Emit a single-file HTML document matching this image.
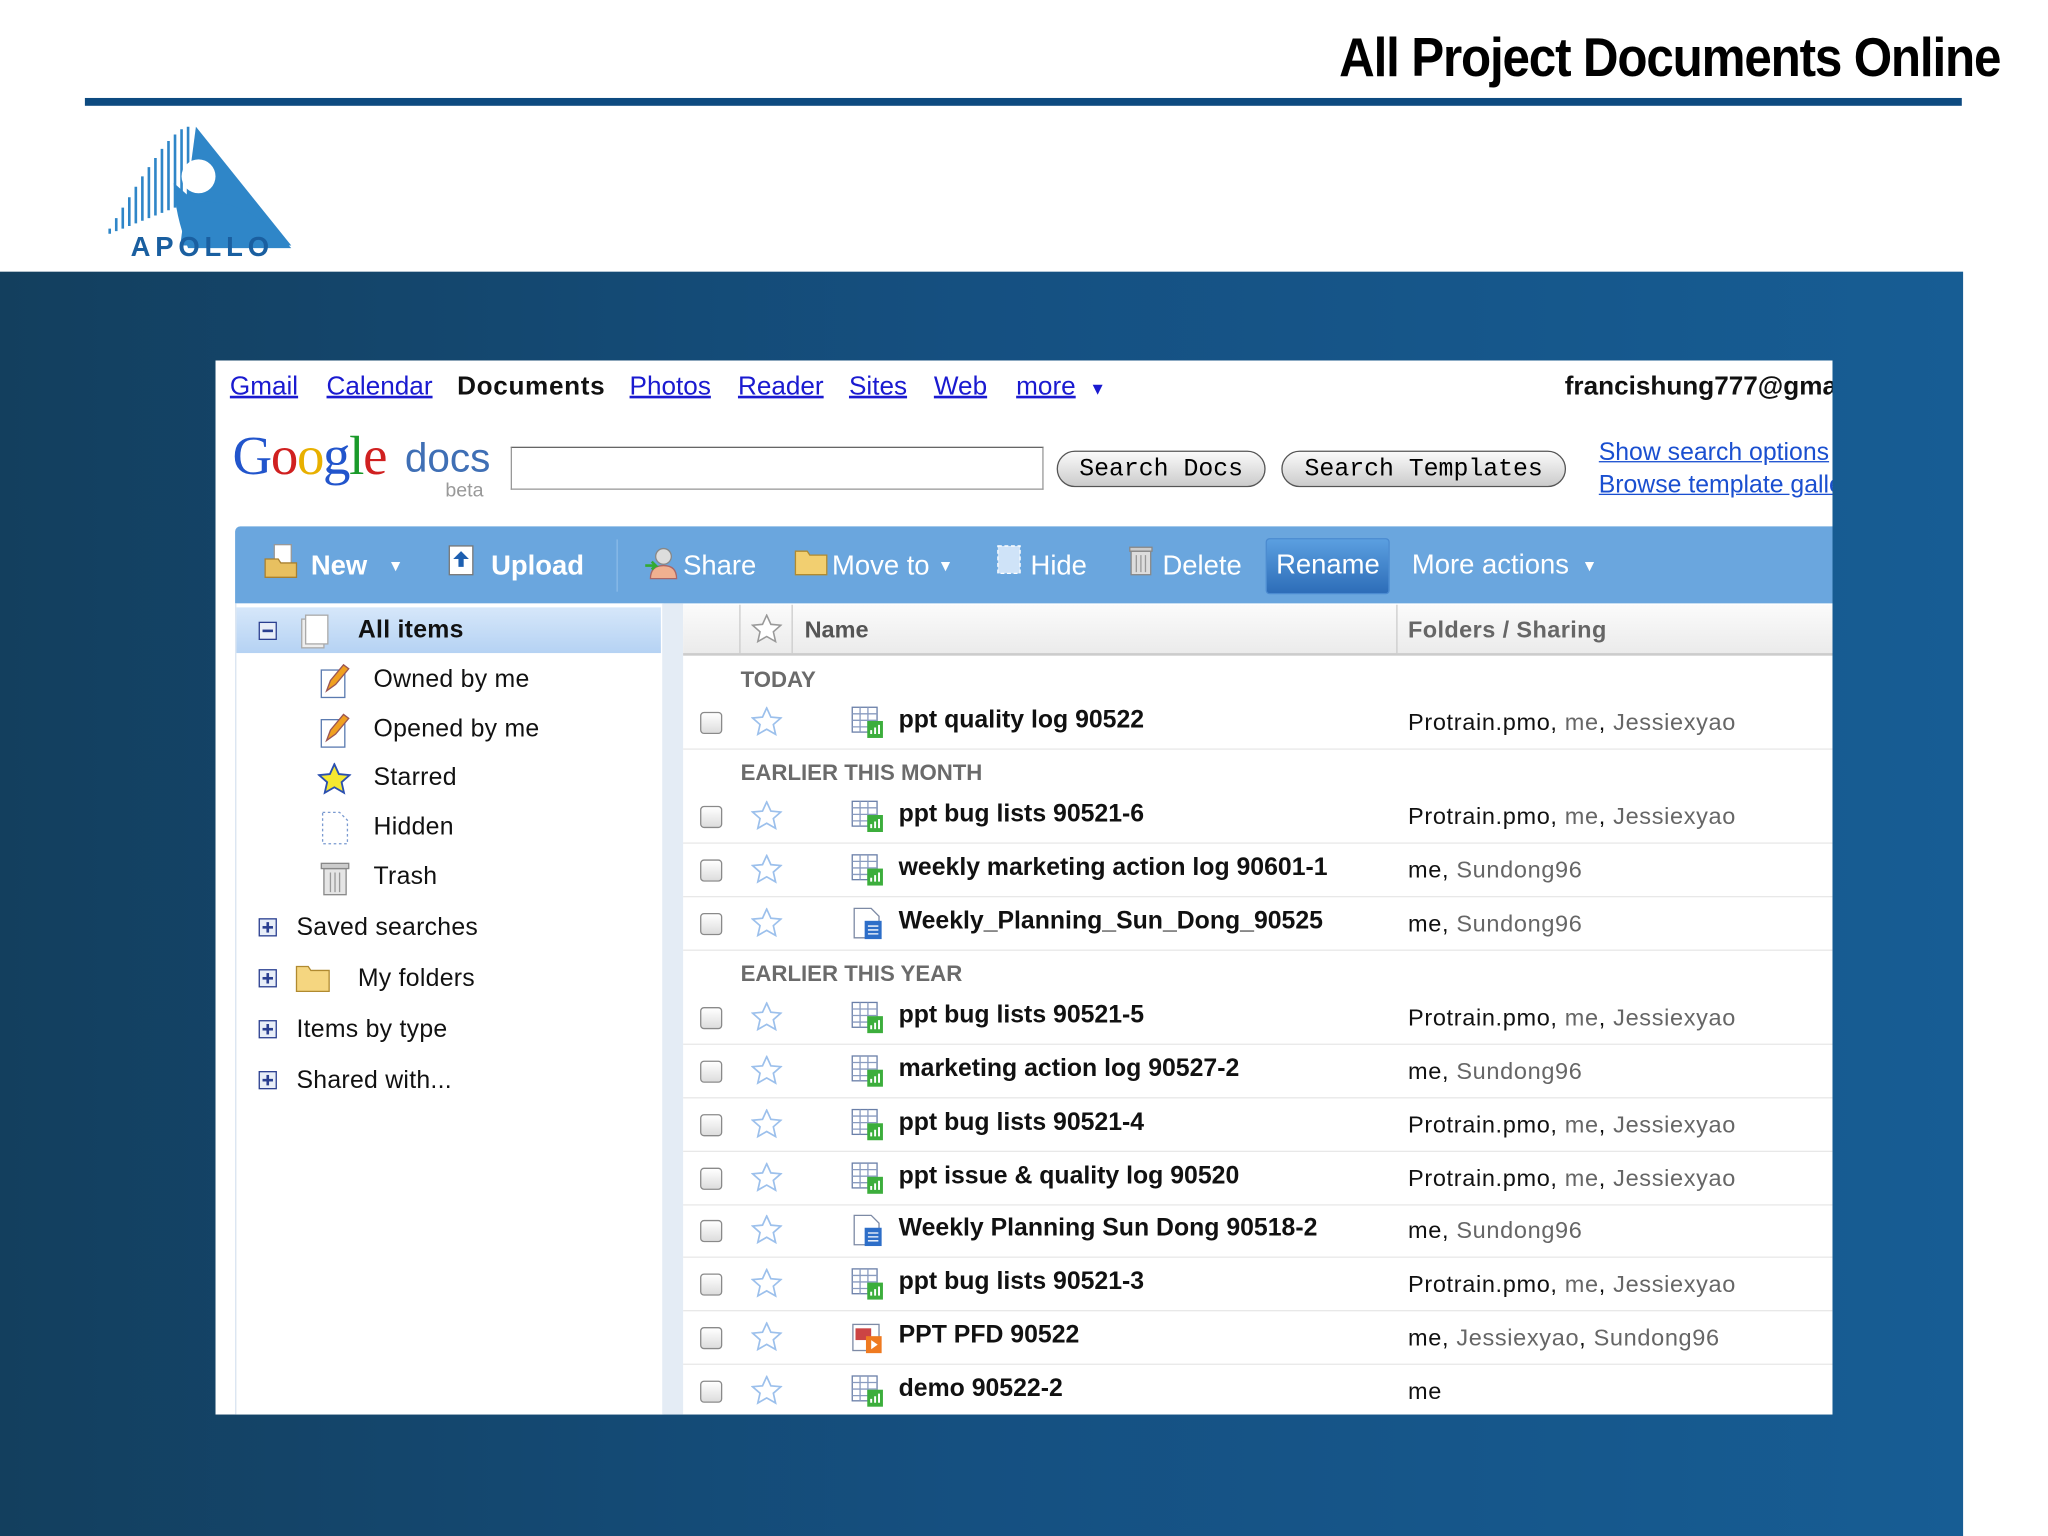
<!DOCTYPE html>
<html><head><meta charset="utf-8"><style>
html,body{margin:0;padding:0;width:2048px;height:1536px;overflow:hidden;background:#fff}
#w{position:absolute;left:0;top:0;width:1568px;height:1176px;transform:scale(1.306122);transform-origin:0 0;font-family:"Liberation Sans",sans-serif}
.a{position:absolute}
.t{position:absolute;white-space:nowrap}
.nav{position:absolute;top:285px;font-size:20px;color:#1a1ad0;text-decoration:underline;white-space:nowrap}
.tb{color:#fff;font-size:21px}
.sec{position:absolute;left:567px;font-size:17px;font-weight:bold;color:#6b6b6b}
.r{position:absolute;left:523px;width:880px;height:40px;border-bottom:1px solid #e8e8e8}
.r .cb{position:absolute;left:13px;top:12px;width:15px;height:15px;border:1px solid #8a8a8a;border-radius:3px;background:linear-gradient(#fff,#ddd)}
.r svg{position:absolute}
.r .n{position:absolute;left:165px;top:8px;font-size:19px;font-weight:bold;color:#111;white-space:nowrap}
.r .s{position:absolute;left:555px;top:10px;font-size:18px;color:#111;white-space:nowrap;letter-spacing:.5px}
.r .s i{font-style:normal;color:#666}
.lp{position:absolute;font-size:19px;color:#111;white-space:nowrap;letter-spacing:.2px}
</style></head><body><div id="w">
<div class="t" style="right:37px;top:20px;font-size:42px;font-weight:bold;letter-spacing:-1px;transform:scaleX(.9);transform-origin:right;font-family:'Liberation Sans Narrow','Liberation Sans',sans-serif">All Project Documents Online</div>
<div class="a" style="left:65px;top:75px;width:1437px;height:6px;background:#0d4a80"></div>
<svg class="a" style="left:78px;top:95px" width="150" height="105" viewBox="0 0 150 105">
<path d="M72 2 L145 93 L60 93 Z" fill="#2f86c8"/>
<g stroke="#2f86c8" stroke-width="2">
<path d="M6 84V80M11 82V72M16 80V64M21 78V56M26 76V48M31 74V40M36 72V33M41 70V26M46 68V19M51 66V13M56 64V8M61 62V4M66 62V2"/></g>
<path d="M55 45 Q56 70 66 95 L145 95 Q110 55 72 60Z" fill="#2f86c8"/>
<circle cx="74" cy="40" r="13" fill="#fff"/>
<text x="22" y="101" font-family="Liberation Sans" font-weight="bold" font-size="21" fill="#1a5fa0" textLength="106">APOLLO</text>
</svg>
<div class="a" style="left:0;top:208px;width:1503px;height:968px;background:linear-gradient(90deg,#133f5e,#155081 50%,#175d94)"></div>
<div class="a" style="left:165px;top:276px;width:1238px;height:807px;background:#fff;overflow:hidden"></div>
<div class="nav" style="left:176px">Gmail</div>
<div class="nav" style="left:250px">Calendar</div>
<div class="nav" style="left:350px;color:#111;text-decoration:none;font-weight:bold;letter-spacing:.5px">Documents</div>
<div class="nav" style="left:482px">Photos</div>
<div class="nav" style="left:565px">Reader</div>
<div class="nav" style="left:650px">Sites</div>
<div class="nav" style="left:715px">Web</div>
<div class="nav" style="left:778px">more</div>
<div class="t" style="left:834px;top:290px;color:#1a1ad0;font-size:13px">▼</div>
<div class="a" style="left:1198px;top:285px;width:205px;overflow:hidden;font-size:20px;font-weight:bold;color:#111;white-space:nowrap">francishung777@gmail.com</div>
<div class="t" style="left:178px;top:326px;font-size:42px;font-family:'Liberation Serif',serif;letter-spacing:-1px"><span style="color:#2255cc">G</span><span style="color:#d02020">o</span><span style="color:#e8b000">o</span><span style="color:#2255cc">g</span><span style="color:#1a9a2a">l</span><span style="color:#d02020">e</span></div>
<div class="t" style="left:310px;top:333px;font-size:31px;color:#3f6fb5">docs</div>
<div class="t" style="left:341px;top:367px;font-size:15px;color:#999">beta</div>
<div class="a" style="left:391px;top:342px;width:406px;height:31px;border:1px solid #999;border-top-color:#666"></div>
<div class="t" style="left:809px;top:345px;width:158px;height:26px;border:1px solid #555;border-radius:14px;background:linear-gradient(#fafafa,#ccc);font-family:'Liberation Mono',monospace;font-size:19px;text-align:center;line-height:26px">Search Docs</div>
<div class="t" style="left:981px;top:345px;width:216px;height:26px;border:1px solid #555;border-radius:14px;background:linear-gradient(#fafafa,#ccc);font-family:'Liberation Mono',monospace;font-size:19px;text-align:center;line-height:26px">Search Templates</div>
<div class="a" style="left:1224px;top:334px;width:179px;overflow:hidden;font-size:19px;line-height:25px;color:#1a4fd0;white-space:nowrap;text-decoration:underline">Show search options<br>Browse template gallery</div>
<div class="a" style="left:180px;top:403px;width:1223px;height:59px;background:#6aa6de;border-radius:4px 0 0 0"></div>
<div class="a" style="left:472px;top:413px;width:1px;height:40px;background:#8bbbe8"></div>
<svg class="a" style="left:201px;top:416px" width="30" height="28"><rect x="9" y="1" width="13" height="17" fill="#fff" stroke="#999"/><path d="M2 12h10l2 3h12v11H2z" fill="#e8c060" stroke="#a88030"/></svg>
<div class="t tb" style="left:238px;top:422px;font-weight:bold">New</div>
<div class="t" style="left:297px;top:426px;color:#fff;font-size:12px">▼</div>
<svg class="a" style="left:342px;top:416px" width="24" height="28"><rect x="2" y="2" width="18" height="22" fill="#fff" stroke="#777"/><path d="M11 6l-6 6h4v6h4v-6h4z" fill="#1d5fb0"/></svg>
<div class="t tb" style="left:376px;top:422px;font-weight:bold">Upload</div>
<svg class="a" style="left:493px;top:418px" width="26" height="26"><circle cx="15" cy="8" r="6" fill="#ddd" stroke="#888"/><path d="M5 25c0-8 5-10 10-10s10 2 10 10z" fill="#f0b090" stroke="#a66"/><path d="M1 15h8l-3 -3M9 15l-3 3" stroke="#3a3" stroke-width="2" fill="none"/></svg>
<div class="t tb" style="left:523px;top:422px">Share</div>
<svg class="a" style="left:608px;top:418px" width="26" height="24"><path d="M1 4h9l2 3h13v15H1z" fill="#f2cf70" stroke="#b08a30"/></svg>
<div class="t tb" style="left:637px;top:422px">Move to</div>
<div class="t" style="left:718px;top:426px;color:#fff;font-size:12px">▼</div>
<svg class="a" style="left:762px;top:416px" width="22" height="26"><rect x="2" y="2" width="17" height="21" fill="#cfe3f8" stroke="#fff" stroke-dasharray="3 2"/></svg>
<div class="t tb" style="left:789px;top:422px">Hide</div>
<svg class="a" style="left:863px;top:416px" width="22" height="26"><rect x="3" y="6" width="15" height="18" fill="#ddd" stroke="#888"/><rect x="2" y="3" width="17" height="3" fill="#ccc" stroke="#888"/><path d="M7 9v13M10.5 9v13M14 9v13" stroke="#999"/></svg>
<div class="t tb" style="left:890px;top:422px">Delete</div>
<div class="a" style="left:969px;top:412px;width:93px;height:41px;border-radius:3px;background:linear-gradient(#5b9fe0,#2d6db8);border:1px solid #4a8ad0"></div>
<div class="t tb" style="left:977px;top:421px">Rename</div>
<div class="t tb" style="left:1081px;top:421px">More actions</div>
<div class="t" style="left:1211px;top:426px;color:#fff;font-size:12px">▼</div>
<div class="a" style="left:180px;top:462px;width:327px;height:621px;background:#fff;border-left:1px solid #d9e4f0"></div>
<div class="a" style="left:181px;top:465px;width:325px;height:35px;background:linear-gradient(#d6e7fa,#b5d2f3)"></div>
<div class="a" style="left:198px;top:476px;width:12px;height:12px;border:1px solid #2a3f90;background:#e8eef8"><div class="a" style="left:2px;top:5px;width:8px;height:2px;background:#2a3f90"></div></div>
<svg class="a" style="left:227px;top:470px" width="26" height="28"><rect x="4" y="4" width="17" height="22" fill="#eee" stroke="#aaa"/><rect x="7" y="1" width="17" height="22" fill="#fff" stroke="#aaa"/></svg>
<div class="lp" style="left:274px;top:472px;font-weight:bold">All items</div>
<svg class="a" style="left:244px;top:507px" width="26" height="28"><rect x="2" y="6" width="18" height="21" fill="#fff" stroke="#5a7ab0"/><path d="M6 22l3-8 10-12 4 3-10 12z" fill="#f0a020" stroke="#955"/></svg>
<div class="lp" style="left:286px;top:510px">Owned by me</div>
<svg class="a" style="left:244px;top:545px" width="26" height="28"><rect x="2" y="6" width="18" height="21" fill="#fff" stroke="#5a7ab0"/><path d="M6 22l3-8 10-12 4 3-10 12z" fill="#f0a020" stroke="#955"/></svg>
<div class="lp" style="left:286px;top:548px">Opened by me</div>
<svg class="a" style="left:243px;top:584px" width="26" height="26" viewBox="0 0 24 24"><path d="M12 1l3.2 7 7.6.7-5.7 5 1.7 7.5L12 17.3 5.2 21.2l1.7-7.5-5.7-5 7.6-.7z" fill="#f5e830" stroke="#2a4fb0" stroke-width="1.3"/></svg>
<div class="lp" style="left:286px;top:585px">Starred</div>
<svg class="a" style="left:245px;top:620px" width="24" height="28"><path d="M2 2h13l6 6v18H2z" fill="#fff" stroke="#7a9ad0" stroke-dasharray="2 2"/></svg>
<div class="lp" style="left:286px;top:623px">Hidden</div>
<svg class="a" style="left:245px;top:658px" width="24" height="28"><rect x="3" y="7" width="17" height="20" fill="#e5e5e5" stroke="#888"/><rect x="1" y="3" width="21" height="4" fill="#ccc" stroke="#888"/><path d="M8 10v15M11.5 10v15M15 10v15" stroke="#999"/></svg>
<div class="lp" style="left:286px;top:661px">Trash</div>
<div class="a" style="left:198px;top:703px;width:12px;height:12px;border:1px solid #2a3f90;background:#e8eef8"><div class="a" style="left:2px;top:5px;width:8px;height:2px;background:#2a3f90"></div><div class="a" style="left:5px;top:2px;width:2px;height:8px;background:#2a3f90"></div></div>
<div class="lp" style="left:227px;top:700px">Saved searches</div>
<div class="a" style="left:198px;top:742px;width:12px;height:12px;border:1px solid #2a3f90;background:#e8eef8"><div class="a" style="left:2px;top:5px;width:8px;height:2px;background:#2a3f90"></div><div class="a" style="left:5px;top:2px;width:2px;height:8px;background:#2a3f90"></div></div>
<svg class="a" style="left:226px;top:737px" width="28" height="24"><path d="M1 3h9l2 3h14v16H1z" fill="#f5d680" stroke="#b08a30"/></svg>
<div class="lp" style="left:274px;top:739px">My folders</div>
<div class="a" style="left:198px;top:781px;width:12px;height:12px;border:1px solid #2a3f90;background:#e8eef8"><div class="a" style="left:2px;top:5px;width:8px;height:2px;background:#2a3f90"></div><div class="a" style="left:5px;top:2px;width:2px;height:8px;background:#2a3f90"></div></div>
<div class="lp" style="left:227px;top:778px">Items by type</div>
<div class="a" style="left:198px;top:820px;width:12px;height:12px;border:1px solid #2a3f90;background:#e8eef8"><div class="a" style="left:2px;top:5px;width:8px;height:2px;background:#2a3f90"></div><div class="a" style="left:5px;top:2px;width:2px;height:8px;background:#2a3f90"></div></div>
<div class="lp" style="left:227px;top:817px">Shared with...</div>
<div class="a" style="left:507px;top:462px;width:16px;height:621px;background:#e4ecf5"></div>
<div class="a" style="left:523px;top:463px;width:880px;height:37px;background:linear-gradient(#fbfbfb,#ebebeb);border-bottom:2px solid #ccc"></div>
<div class="a" style="left:566px;top:463px;width:1px;height:37px;background:#ccc"></div>
<div class="a" style="left:606px;top:463px;width:1px;height:37px;background:#ccc"></div>
<div class="a" style="left:1069px;top:463px;width:1px;height:37px;background:#ccc"></div>
<svg class="a" style="left:575px;top:470px" width="24" height="24" viewBox="0 0 24 24"><path d="M12 1l3.2 7 7.6.7-5.7 5 1.7 7.5L12 17.3 5.2 21.2l1.7-7.5-5.7-5 7.6-.7z" fill="#fff" stroke="#999" stroke-width="1.2"/></svg>
<div class="t" style="left:616px;top:472px;font-size:18px;font-weight:bold;color:#555">Name</div>
<div class="t" style="left:1078px;top:472px;font-size:18px;font-weight:bold;color:#666;letter-spacing:.3px">Folders / Sharing</div>
<svg width="0" height="0" style="position:absolute"><defs>
<g id="st"><path d="M12 1l3.2 7 7.6.7-5.7 5 1.7 7.5L12 17.3 5.2 21.2l1.7-7.5-5.7-5 7.6-.7z" fill="#fff" stroke="#9cc0ec" stroke-width="1.3"/></g>
<g id="sh"><rect x="1.5" y="1.5" width="19" height="19" fill="#fff" stroke="#6a7fa8"/><path d="M1.5 6.5h19M1.5 11.5h19M1.5 16.5h19M7.5 1.5v19M13.5 1.5v19" stroke="#8a9cc0"/><rect x="13" y="12" width="12" height="13" fill="#3cae3c"/><path d="M16 22v-3M19 22v-5M22 22v-7" stroke="#fff" stroke-width="1.5"/></g>
<g id="dc"><path d="M3 1.5h13l6 6V24H3z" fill="#fff" stroke="#7d8aa5"/><rect x="11" y="11" width="13" height="14" fill="#2d6ec8"/><path d="M13.5 15h8M13.5 18h8M13.5 21h8" stroke="#fff"/></g>
<g id="pp"><rect x="2" y="3" width="20" height="20" fill="#fff" stroke="#7d8aa5"/><rect x="4" y="6" width="12" height="9" fill="#c44"/><rect x="12" y="12" width="12" height="13" fill="#ef7a20"/><path d="M16 15v7l5-3.5z" fill="#fff"/></g>
</defs></svg>
<div class="sec" style="top:511px">TODAY</div>
<div class="sec" style="top:582px">EARLIER THIS MONTH</div>
<div class="sec" style="top:736px">EARLIER THIS YEAR</div>

<div class="r" style="top:533px"><div class="cb"></div><svg style="left:52px;top:8px" width="24" height="24" viewBox="0 0 24 24"><use href="#st"/></svg><svg style="left:128px;top:7px" width="26" height="26"><use href="#sh"/></svg><div class="n">ppt quality log 90522</div><div class="s">Protrain.pmo, <i>me</i>, <i>Jessiexyao</i></div></div>
<div class="r" style="top:605px"><div class="cb"></div><svg style="left:52px;top:8px" width="24" height="24" viewBox="0 0 24 24"><use href="#st"/></svg><svg style="left:128px;top:7px" width="26" height="26"><use href="#sh"/></svg><div class="n">ppt bug lists 90521-6</div><div class="s">Protrain.pmo, <i>me</i>, <i>Jessiexyao</i></div></div>
<div class="r" style="top:646px"><div class="cb"></div><svg style="left:52px;top:8px" width="24" height="24" viewBox="0 0 24 24"><use href="#st"/></svg><svg style="left:128px;top:7px" width="26" height="26"><use href="#sh"/></svg><div class="n">weekly marketing action log 90601-1</div><div class="s">me, <i>Sundong96</i></div></div>
<div class="r" style="top:687px"><div class="cb"></div><svg style="left:52px;top:8px" width="24" height="24" viewBox="0 0 24 24"><use href="#st"/></svg><svg style="left:128px;top:7px" width="26" height="26"><use href="#dc"/></svg><div class="n">Weekly_Planning_Sun_Dong_90525</div><div class="s">me, <i>Sundong96</i></div></div>
<div class="r" style="top:759px"><div class="cb"></div><svg style="left:52px;top:8px" width="24" height="24" viewBox="0 0 24 24"><use href="#st"/></svg><svg style="left:128px;top:7px" width="26" height="26"><use href="#sh"/></svg><div class="n">ppt bug lists 90521-5</div><div class="s">Protrain.pmo, <i>me</i>, <i>Jessiexyao</i></div></div>
<div class="r" style="top:800px"><div class="cb"></div><svg style="left:52px;top:8px" width="24" height="24" viewBox="0 0 24 24"><use href="#st"/></svg><svg style="left:128px;top:7px" width="26" height="26"><use href="#sh"/></svg><div class="n">marketing action log 90527-2</div><div class="s">me, <i>Sundong96</i></div></div>
<div class="r" style="top:841px"><div class="cb"></div><svg style="left:52px;top:8px" width="24" height="24" viewBox="0 0 24 24"><use href="#st"/></svg><svg style="left:128px;top:7px" width="26" height="26"><use href="#sh"/></svg><div class="n">ppt bug lists 90521-4</div><div class="s">Protrain.pmo, <i>me</i>, <i>Jessiexyao</i></div></div>
<div class="r" style="top:882px"><div class="cb"></div><svg style="left:52px;top:8px" width="24" height="24" viewBox="0 0 24 24"><use href="#st"/></svg><svg style="left:128px;top:7px" width="26" height="26"><use href="#sh"/></svg><div class="n">ppt issue &amp; quality log 90520</div><div class="s">Protrain.pmo, <i>me</i>, <i>Jessiexyao</i></div></div>
<div class="r" style="top:922px"><div class="cb"></div><svg style="left:52px;top:8px" width="24" height="24" viewBox="0 0 24 24"><use href="#st"/></svg><svg style="left:128px;top:7px" width="26" height="26"><use href="#dc"/></svg><div class="n">Weekly Planning Sun Dong 90518-2</div><div class="s">me, <i>Sundong96</i></div></div>
<div class="r" style="top:963px"><div class="cb"></div><svg style="left:52px;top:8px" width="24" height="24" viewBox="0 0 24 24"><use href="#st"/></svg><svg style="left:128px;top:7px" width="26" height="26"><use href="#sh"/></svg><div class="n">ppt bug lists 90521-3</div><div class="s">Protrain.pmo, <i>me</i>, <i>Jessiexyao</i></div></div>
<div class="r" style="top:1004px"><div class="cb"></div><svg style="left:52px;top:8px" width="24" height="24" viewBox="0 0 24 24"><use href="#st"/></svg><svg style="left:128px;top:7px" width="26" height="26"><use href="#pp"/></svg><div class="n">PPT PFD 90522</div><div class="s">me, <i>Jessiexyao</i>, <i>Sundong96</i></div></div>
<div class="r" style="top:1045px;height:38px;border:0"><div class="cb"></div><svg style="left:52px;top:8px" width="24" height="24" viewBox="0 0 24 24"><use href="#st"/></svg><svg style="left:128px;top:7px" width="26" height="26"><use href="#sh"/></svg><div class="n">demo 90522-2</div><div class="s">me</div></div>
</div></body></html>
